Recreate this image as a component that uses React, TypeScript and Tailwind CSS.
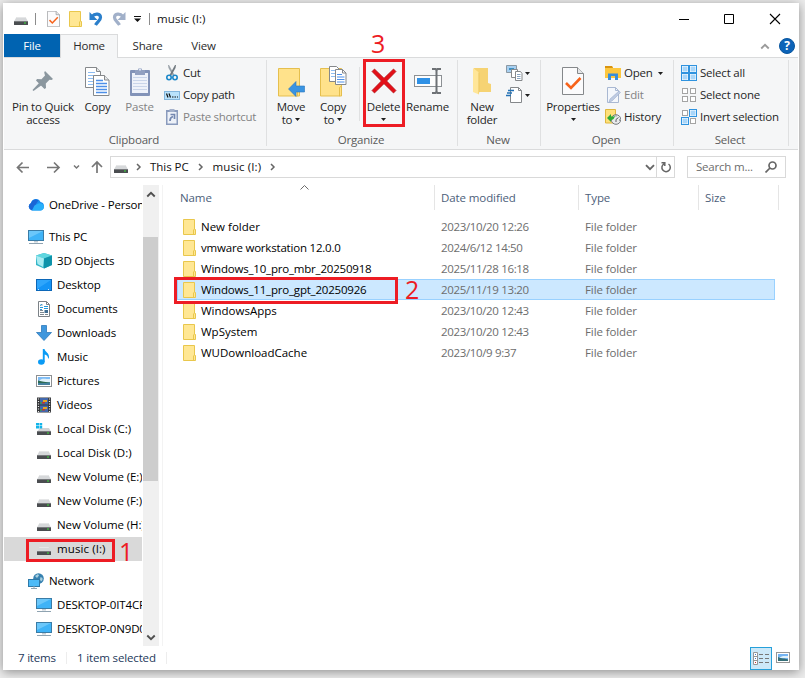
import type { ReactNode } from "react";

type IconProps = { className?: string };

function DriveIcon({ className = "w-4 h-4" }: IconProps) {
  return (
    <svg viewBox="0 0 16 16" className={className}>
      <path d="M3.500 6h9l2.500 4.500H1z" fill="#d6d8da" />
      <path d="M3.500 6h9l.6 1H2.900z" fill="#e6e7e8" />
      <rect x="1" y="10" width="14" height="4" rx=".5" fill="#4a4d50" />
      <rect x="1" y="10" width="14" height="1" fill="#77797c" />
      <rect x="11" y="11.500" width="2" height="1" fill="#3be23b" />
    </svg>
  );
}

function SystemDriveIcon() {
  return (
    <svg viewBox="0 0 16 16" className="w-4 h-4">
      <path d="M4 7h9l2 3.500H1z" fill="#d0d2d4" />
      <rect x="1" y="10" width="14" height="4" rx=".5" fill="#4a4d50" />
      <rect x="1" y="10" width="14" height="1" fill="#77797c" />
      <rect x="11" y="11.500" width="2" height="1" fill="#3be23b" />
      <path d="M0 2h3v2.500H0zM3.500 2h2.700v2.500H3.500zM0 5h3v2.500H0zM3.500 5h2.700v2.500H3.500z" fill="#12b5ea" />
    </svg>
  );
}

function FolderIcon({ className = "w-4 h-4" }: IconProps) {
  return (
    <svg viewBox="0 0 16 16" className={className}>
      <path d="M2.500.5h11v9.500l1 .5v5h-12z" fill="#ffe794" stroke="#e9c74c" />
      <path d="M12.500 15.500v-4.500l1-1" fill="none" stroke="#e9c74c" />
    </svg>
  );
}

function CloudIcon() {
  return (
    <svg viewBox="0 0 16 16" className="w-4 h-4">
      <path d="M4 13.500A4 4 0 0 1 3 6a5 5 0 0 1 9.500-1A4.300 4.300 0 0 1 12 13.500z" fill="#1b8ff0" />
      <path d="M3 6a5 5 0 0 1 7.500-2.800L4 13.500A4 4 0 0 1 3 6z" fill="#1a66d6" />
      <path d="M6.500 8.500 11 6.300a4 4 0 0 1 5 3.500 3.600 3.600 0 0 1-3.700 3.700H4z" fill="#29b0fa" />
    </svg>
  );
}

function MonitorIcon() {
  return (
    <svg viewBox="0 0 16 16" className="w-4 h-4">
      <rect x=".5" y="1.500" width="15" height="10" fill="#3fb3f7" stroke="#3a7ca6" />
      <path d="M1 2h14L1 9z" fill="#7fd0fb" opacity=".7" />
      <path d="M6 12h4v1.500H6z" fill="#c3cdd4" />
      <path d="M1 14.500h14" stroke="#8fa3b1" />
    </svg>
  );
}

function CubeIcon() {
  return (
    <svg viewBox="0 0 16 16" className="w-4 h-4">
      <path d="M8 0l8 2.500v9.500L8 15.500 0 12V2.500z" fill="#35b6c8" />
      <path d="M8 0l8 2.500-8 3-8-3z" fill="#5fd6df" />
      <path d="M8 5.500l8-3v9.500l-8 3.500z" fill="#0e93aa" />
      <path d="M0 2.500l8 3-1 8.500-5.500-3z" fill="#a8ecf2" />
    </svg>
  );
}

function DesktopIcon() {
  return (
    <svg viewBox="0 0 16 16" className="w-4 h-4">
      <rect x=".5" y="2.500" width="15" height="11" fill="#1494f6" stroke="#0c67b8" />
      <path d="M1 3h14L1 12z" fill="#3fb0ff" opacity=".6" />
      <path d="M2 12.500h1.500M12 12.500h2" stroke="#bfe2ff" strokeDasharray="1 1" />
    </svg>
  );
}

function DocumentIcon() {
  return (
    <svg viewBox="0 0 16 16" className="w-4 h-4">
      <path d="M2.500.5h8l3 3v12h-11z" fill="#fff" stroke="#7c8287" />
      <path d="M10.500.5v3h3" fill="none" stroke="#7c8287" />
      <path d="M4 11.500h4M4 13.500h4M4 9.500h3M9 13.500h3" stroke="#7f8a91" />
      <path d="M4 4.500l1.500-1 1 .5M4 6.500h3M8 5.500h4M8 7.500h4M4 8.500h2" stroke="#2398db" />
      <rect x="8.500" y="9" width="3.500" height="3" fill="#3f6d92" />
    </svg>
  );
}

function DownloadIcon() {
  return (
    <svg viewBox="0 0 16 16" className="w-4 h-4">
      <path d="M5.500.5h5v7h5L8 15.500.5 7.500h5z" fill="#3f97dd" stroke="#2c79bb" strokeWidth=".8" />
    </svg>
  );
}

function MusicIcon() {
  return (
    <svg viewBox="0 0 16 16" className="w-4 h-4">
      <ellipse cx="5.300" cy="13" rx="3.300" ry="2.700" fill="#0a9bf5" />
      <path d="M6.800 0h1.700c.5 3 5 4 4.500 8.500l-.8 1.500c-.2-3-1.700-4-3.500-4.500V13H6.800z" fill="#0a9bf5" />
    </svg>
  );
}

function PictureIcon() {
  return (
    <svg viewBox="0 0 16 16" className="w-4 h-4">
      <rect x=".5" y="2.500" width="15" height="11" fill="#fff" stroke="#8c8f92" />
      <rect x="2" y="4" width="12" height="8" fill="#7ebcf5" />
      <path d="M4 7c2-2 5-1 10-1v3H2z" fill="#dff0fa" />
      <path d="M2 7.500c3 .5 5 1.500 12 2V10H2z" fill="#2c6b54" />
      <path d="M2 10h12v2H2z" fill="#437f9d" />
    </svg>
  );
}

function VideoIcon() {
  return (
    <svg viewBox="0 0 16 16" className="w-4 h-4">
      <path d="M1 .500h14v15H1z" fill="#35373a" />
      <path d="M4 1h8v6.500H4zM4 8.500h8V15H4z" fill="#4268ad" />
      <path d="M2.500 1.500v14M13.500 1.500v14" stroke="#eee" strokeWidth="1.200" strokeDasharray="1 1.500" />
      <path d="M7 3h4v2H7zM7 10h4v2H7z" fill="#e3a522" />
      <path d="M6 5h3v1.500H6zM6 12h3v1.500H6z" fill="#c3352b" />
      <path d="M4 5h1.500v2H4zM4 12h1.500v2H4z" fill="#3a9b4c" />
    </svg>
  );
}

function NetworkIcon() {
  return (
    <svg viewBox="0 0 16 16" className="w-4 h-4">
      <circle cx="10.500" cy="5.500" r="5.300" fill="#3681b0" />
      <path d="M7 3l3-2 1 1.500-2 2.500zM12.500 4l2 1v2l-1.500 1.500-1-2z" fill="#a9cfdf" />
      <rect x=".5" y="6.500" width="11" height="7" fill="#4dbbf8" stroke="#2f79a8" />
      <path d="M3 15.500h6M5 14h2" stroke="#8fa3b1" />
    </svg>
  );
}

function CheckPageIcon({ className }: IconProps) {
  return (
    <svg viewBox="0 0 22 28" className={className}>
      <path d="M.5.500h15l6 6v21H.5z" fill="#fbfbfc" stroke="#85888b" />
      <path d="M15.500.5v6h6" fill="#e4e6e8" stroke="#85888b" />
      <path d="M4 16l5 5 9.500-10" fill="none" stroke="#f7631b" strokeWidth="2.600" />
    </svg>
  );
}

function UndoIcon({ flip = false }: { flip?: boolean }) {
  return (
    <svg viewBox="0 0 14 15" className={flip ? "w-[14px] h-[15px] -scale-x-100" : "w-[14px] h-[15px]"}>
      <path
        d="M3 5.500C6 2 11.500 2.500 11.500 6.500c0 3-3 4-5 7.500"
        fill="none"
        stroke={flip ? "#a1b0c9" : "#2b7fcb"}
        strokeWidth="3.200"
      />
      <path d="M.5 1v8H8.500z" fill={flip ? "#a1b0c9" : "#2b7fcb"} />
    </svg>
  );
}

function PinIcon() {
  return (
    <svg viewBox="0 0 22 22" className="w-[22px] h-[22px]">
      <path d="M13 1l8 8-1.500 1-2-.3-3.700 3.800.2 4.500-1.500 1L4 10.500l1-1.500 4.500.2L13 5.500l-.8-3z" fill="#8b979f" />
      <path d="M8 12l2.500 2.500L1.500 21 .5 20z" fill="#8b979f" />
    </svg>
  );
}

function PagesIcon() {
  return (
    <svg viewBox="0 0 25 29" className="w-[25px] h-[29px]">
      <path d="M.5.5h11l4 4v16H.5z" fill="#fff" stroke="#85888b" />
      <path d="M11.500.5v4h4" fill="#e4e6e8" stroke="#85888b" />
      <path d="M3 5.500h7M3 8.500h10M3 11.500h10M3 14.500h10M3 17.500h10" stroke="#8dbcf1" />
      <path d="M8.500 8.500h11l4.500 4.500v15.500H8.500z" fill="#fff" stroke="#85888b" />
      <path d="M19.500 8.500v4.500h4.500" fill="#e4e6e8" stroke="#85888b" />
      <path d="M11 13.500h7M11 16.500h11M11 19.500h11M11 22.500h11M11 25.500h11" stroke="#4d8fe8" strokeWidth="1.300" />
    </svg>
  );
}

function PasteIcon() {
  return (
    <svg viewBox="0 0 20 29" className="w-5 h-[29px]">
      <rect x="0" y="3" width="20" height="26" rx="1" fill="#8293b8" />
      <path d="M2 6h16v20H2z" fill="#eef2fa" />
      <path d="M3 10.500h14M3 13.500h14M3 16.500h14M3 19.500h14M3 22.500h14" stroke="#c9d5ea" />
      <path d="M5 3h3a2 2 0 0 1 4 0h3v5H5z" fill="#91a0c1" />
      <rect x="9" y="1.500" width="2" height="2" fill="#dfe6f2" />
    </svg>
  );
}

function ScissorsIcon() {
  return (
    <svg viewBox="0 0 16 16" className="w-4 h-4">
      <path d="M4 0l1 0 5.500 10-1.500 1L4.500 3z" fill="#9ba3aa" />
      <path d="M12 0l-1 0L5.500 10 7 11l4.500-8z" fill="#70787f" />
      <circle cx="5" cy="12.500" r="2.200" fill="none" stroke="#1b87c9" strokeWidth="1.600" />
      <circle cx="11" cy="12.500" r="2.200" fill="none" stroke="#1b87c9" strokeWidth="1.600" />
    </svg>
  );
}

function PathIcon() {
  return (
    <svg viewBox="0 0 16 16" className="w-4 h-4">
      <rect x="0" y="4" width="16" height="9" fill="#84b6dd" />
      <rect x="1" y="5" width="14" height="7" fill="#b9e2fb" />
      <path d="M2.500 6.500l1.500 4M5 6.500l1.500 4M8 10h1.500M10.500 10H12M13 10h1" stroke="#111" strokeWidth="1.200" />
    </svg>
  );
}

function ShortcutIcon() {
  return (
    <svg viewBox="0 0 16 16" className="w-4 h-4">
      <path d="M2 1h12v15H2z" fill="#8a9bbd" />
      <path d="M3.500 3h9v11.500h-9z" fill="#edf1f8" />
      <path d="M5.500 0h5v3h-5z" fill="#a4b1cb" />
      <path d="M6 12c0-3 1-4 3-4.500M6.500 5.500h4v4.500" fill="none" stroke="#7488b0" strokeWidth="1.700" />
    </svg>
  );
}

function BigFolder({ children }: { children: ReactNode }) {
  return (
    <svg viewBox="0 0 28 32" className="w-7 h-8">
      <path d="M1.500 3.500h21v18l-1.500 1v8.500H1.500z" fill="#ffe28b" stroke="#e5bf4e" />
      <path d="M20.500 31v-8.500l2-1.500v10z" fill="#ffe28b" stroke="#e5bf4e" />
      {children}
    </svg>
  );
}

function MoveToIcon() {
  return (
    <BigFolder>
      <path d="M11.500 24l7.500-7.500v4.500h8.500v6H19v4.500z" fill="#3994e2" stroke="#2875bd" strokeWidth=".6" />
    </BigFolder>
  );
}

function CopyToIcon() {
  return (
    <BigFolder>
      <path d="M10.500 1.500h7l3 3v12h-10z" fill="#fff" stroke="#85888b" />
      <path d="M12 5.500h5M12 8.500h5M12 11.500h5" stroke="#8dbcf1" />
      <path d="M16.500 4.500h7l3.500 3.500v11.500H16.500z" fill="#fff" stroke="#85888b" />
      <path d="M23.500 4.500v3.500h3.500" fill="none" stroke="#85888b" />
      <path d="M18 9.500h5M18 12h7.500M18 14.500h7.500M18 17h7.500" stroke="#4d8fe8" />
    </BigFolder>
  );
}

function DeleteIcon() {
  return (
    <svg viewBox="0 0 26 26" className="w-[26px] h-[26px]">
      <path d="M3.500 1L13 10.200 22.500 1 25 3.500 15.700 13 25 22.500 22.500 25 13 15.700 3.500 25 1 22.500 10.300 13 1 3.500z" fill="#e30f17" stroke="#ad1016" strokeWidth=".7" />
    </svg>
  );
}

function RenameIcon() {
  return (
    <svg viewBox="0 0 28 26" className="w-7 h-[26px]">
      <rect x=".5" y="7.500" width="27" height="11" fill="#fdfdfd" stroke="#8c9094" />
      <rect x="3" y="10" width="13" height="6" fill="#2f91e6" />
      <path d="M18 1h3.500l1 1.500 1-1.500H27M18 25h3.500l1-1.500 1 1.500H27M22.500 2v22" fill="none" stroke="#6d7175" strokeWidth="2" />
    </svg>
  );
}

function NewFolderIcon() {
  return (
    <svg viewBox="0 0 18 28" className="w-[18px] h-7">
      <path d="M1 1h14v15l3 1v8H4z" fill="#f6d373" />
      <path d="M0 1l6 4.500V27.500L0 25z" fill="#ffe699" />
      <path d="M5.500 5.500h.8V25l-.8 2.500z" fill="#e9c35c" />
    </svg>
  );
}

function NewItemIcon() {
  return (
    <svg viewBox="0 0 17 16" className="w-[17px] h-4">
      <path d="M.5.5h10v7H.5z" fill="#a7cff0" stroke="#8b98a3" />
      <path d="M3 3h5v2H3z" fill="#3d8fc2" />
      <path d="M5.500 4.500h6v8h-6z" fill="#fff" stroke="#85888b" />
      <path d="M9.500 6.500h5l1.500 2v7H9.500z" fill="#fff" stroke="#85888b" />
      <path d="M11 9.500h3.500M11 11.500h3.500M11 13.500h3.500" stroke="#89a4c1" />
    </svg>
  );
}

function EasyAccessIcon() {
  return (
    <svg viewBox="0 0 17 16" className="w-[17px] h-4">
      <path d="M4.500.5h8l3 3v12h-11z" fill="#fff" stroke="#85888b" />
      <path d="M12.500.5v3h3" fill="none" stroke="#85888b" />
      <path d="M2 3.500h6M1 6h5M0 8.500h5" stroke="#2371b5" strokeWidth="1.500" />
    </svg>
  );
}

function OpenIcon() {
  return (
    <svg viewBox="0 0 16 16" className="w-4 h-4">
      <path d="M0 1h7l1 2h8v10H0z" fill="#fcc740" />
      <path d="M0 1h7l1 2H0z" fill="#d99410" />
      <path d="M3 15V8.500h10V15h-3v-4H6v4z" fill="#378edc" />
    </svg>
  );
}

function EditIcon() {
  return (
    <svg viewBox="0 0 16 16" className="w-4 h-4">
      <path d="M2.500.5h8l3 3v12h-11z" fill="#f4f7fc" stroke="#a9b8d2" />
      <path d="M10.500.5v3h3" fill="none" stroke="#a9b8d2" />
      <path d="M14 4l1.500 1.500L7 14l-3 1 1-3z" fill="#becbe2" stroke="#94a7ca" strokeWidth=".5" />
    </svg>
  );
}

function HistoryIcon() {
  return (
    <svg viewBox="0 0 16 16" className="w-4 h-4">
      <path d="M.5.5h10v13.500H.5z" fill="#ffe07a" stroke="#dfb73e" />
      <circle cx="11" cy="10.500" r="4.800" fill="#e9ebec" stroke="#74797d" />
      <path d="M11 10.500l2.500-2M11 10.500V13M8 8l1 1M11 6.500v1M14 11h1" stroke="#5c6165" />
      <path d="M2 9l4-4v2.500c3 0 3 0 4-1-.5 3-2 4.500-4 4.500V13z" fill="#2faa35" />
    </svg>
  );
}

function TilesIcon({ on }: { on: boolean[] }) {
  const spots = [[0, 0], [8, 0], [0, 8], [8, 8]];
  return (
    <svg viewBox="0 0 16 16" className="w-4 h-4">
      {spots.map(([x, y], i) =>
        on[i] ? (
          <g key={i}>
            <rect x={x + 0.5} y={y + 0.5} width="7" height="7" fill="#fff" stroke="#2f93df" />
            <rect x={x + 1.5} y={y + 1.5} width="5" height="5" fill="#a9d6f9" />
          </g>
        ) : (
          <rect key={i} x={x + 1.5} y={y + 1.5} width="5" height="5" fill="#fff" stroke="#a4a4a4" />
        ),
      )}
    </svg>
  );
}

function Caret() {
  return (
    <svg viewBox="0 0 5 3" className="w-[5px] h-[3px] shrink-0">
      <path d="M0 0h5L2.500 3z" fill="#1e1e1e" />
    </svg>
  );
}

function Chevron({ className, d = "M2 1l3 3-3 3" }: { className: string; d?: string }) {
  return (
    <svg viewBox="0 0 8 8" className={className}>
      <path d={d} fill="none" stroke="currentColor" strokeWidth="1.500" />
    </svg>
  );
}

function BigButton({ icon, lines, width, dim = false, caret = false }: {
  icon: ReactNode;
  lines: string[];
  width: string;
  dim?: boolean;
  caret?: boolean;
}) {
  return (
    <div className={`${width} shrink-0 flex flex-col items-center`}>
      <div className="h-[38px] flex items-center justify-center">{icon}</div>
      {lines.map((line, i) => (
        <div
          key={line}
          className={`h-[13px] leading-[13px] flex items-center gap-[3px] ${dim ? "text-[#838383]" : ""}`}
        >
          {line}
          {caret && i === 1 && <Caret />}
        </div>
      ))}
      {caret && lines.length === 1 && (
        <div className="h-3 flex items-center"><Caret /></div>
      )}
    </div>
  );
}

function SmallButton({ icon, label, dim = false, caret = false }: {
  icon: ReactNode;
  label: string;
  dim?: boolean;
  caret?: boolean;
}) {
  return (
    <div className={`h-[22px] flex items-center gap-[3px] ${dim ? "text-[#838383]" : ""}`}>
      {icon}
      <span>{label}</span>
      {caret && <span className="pl-[2px] flex"><Caret /></span>}
    </div>
  );
}

function Group({ label, width, children }: { label: string; width: string; children: ReactNode }) {
  return (
    <div className={`${width} shrink-0 mt-[2px] h-[86px] border-r border-[#dfe0e1] flex flex-col justify-between`}>
      <div className="flex pt-[2px] h-[71px]">{children}</div>
      <div className="h-[13px] leading-[13px] text-center text-[#5a5a5a] -ml-[2px]">{label}</div>
    </div>
  );
}

const tree = [
  { icon: <CubeIcon />, label: "3D Objects" },
  { icon: <DesktopIcon />, label: "Desktop" },
  { icon: <DocumentIcon />, label: "Documents" },
  { icon: <DownloadIcon />, label: "Downloads" },
  { icon: <MusicIcon />, label: "Music" },
  { icon: <PictureIcon />, label: "Pictures" },
  { icon: <VideoIcon />, label: "Videos" },
  { icon: <SystemDriveIcon />, label: "Local Disk (C:)", tracking: "tracking-[0.05px]" },
  { icon: <DriveIcon />, label: "Local Disk (D:)", tracking: "tracking-[0px]" },
  { icon: <DriveIcon />, label: "New Volume (E:)" },
  { icon: <DriveIcon />, label: "New Volume (F:)" },
  { icon: <DriveIcon />, label: "New Volume (H:)" },
  { icon: <DriveIcon />, label: "music (I:)", tracking: "tracking-[0.1px]", selected: true },
];

const files = [
  { name: "New folder", date: "2023/10/20 12:26" },
  { name: "vmware workstation 12.0.0", date: "2024/6/12 14:50", tight: true },
  { name: "Windows_10_pro_mbr_20250918", date: "2025/11/28 16:18", tight: true },
  { name: "Windows_11_pro_gpt_20250926", date: "2025/11/19 13:20", tight: true, selected: true },
  { name: "WindowsApps", date: "2023/10/20 12:43" },
  { name: "WpSystem", date: "2023/10/20 12:43" },
  { name: "WUDownloadCache", date: "2023/10/9 9:37" },
];

function TreeRow({ icon, label, root = false, tracking = "tracking-[-0.1px]", selected = false }: {
  icon: ReactNode;
  label: string;
  root?: boolean;
  tracking?: string;
  selected?: boolean;
}) {
  return (
    <div
      className={`h-6 w-[138px] flex items-center gap-[5px] overflow-hidden whitespace-nowrap ${
        root ? "pl-6" : "pl-8"
      } ${tracking} ${selected ? "bg-[#d9d9d9]" : ""}`}
    >
      <span className="shrink-0">{icon}</span>
      <span>{label}</span>
    </div>
  );
}

function TitleBar() {
  return (
    <div className="h-[31px] flex items-center pl-[9px] text-[#111]">
      <DriveIcon className="w-4 h-4" />
      <span className="ml-[6px] w-px h-3 bg-[#8c8c8c]" />
      <CheckPageIcon className="ml-[11px] w-[13px] h-4" />
      <FolderIcon className="ml-[7px] w-4 h-4" />
      <span className="ml-[6px]"><UndoIcon /></span>
      <span className="ml-[9px]"><UndoIcon flip /></span>
      <svg viewBox="0 0 7 6" className="ml-[8px] mt-px w-[7px] h-[6px]">
        <path d="M0 .500h7" stroke="#111" />
        <path d="M0 2.500h7L3.500 6z" fill="#111" />
      </svg>
      <span className="ml-[8px] w-px h-3 bg-[#8c8c8c]" />
      <span className="ml-[7px] tracking-[0.1px]">music (I:)</span>
      <svg viewBox="0 0 102 12" className="ml-auto mr-[17px] w-[102px] h-3" fill="none" stroke="#000">
        <path d="M0 6.500h10" />
        <path d="M45.500 1.500h9v9h-9z" />
        <path d="M91 1l10 10M101 1L91 11" strokeWidth="1.100" />
      </svg>
    </div>
  );
}

function Tabs() {
  return (
    <div className="h-6 flex leading-6 text-[#2b2b2b] border-b border-[#dadbdc]">
      <div className="w-14 h-[23px] bg-[#0063b1] text-white text-center leading-[23px]">File</div>
      <div className="w-[58px] h-6 bg-[#f5f6f7] border-t border-x border-[#dadbdc] text-center leading-[22px]">Home</div>
      <div className="w-[59px] text-center leading-[23px]">Share</div>
      <div className="w-[53px] text-center leading-[23px]">View</div>
      <div className="ml-auto mr-[3px] flex items-center gap-[9px]">
        <Chevron className="w-[10px] h-[10px] text-[#9a9a9a]" d="M1 6l3-3 3 3" />
        <div className="w-4 h-4 rounded-full bg-[#0c63b8] border border-[#09569f] text-white font-bold text-[12px] leading-[14px] text-center">
          ?
        </div>
      </div>
    </div>
  );
}

function Ribbon() {
  return (
    <div className="h-[92px] bg-[#f5f6f7] border-b border-[#dadbdc] flex text-[#262626] whitespace-nowrap">
      <Group label="Clipboard" width="w-[263px]">
        <BigButton width="w-[78px]" icon={<PinIcon />} lines={["Pin to Quick", "access"]} />
        <BigButton width="w-[31px]" icon={<PagesIcon />} lines={["Copy"]} />
        <BigButton width="w-[53px]" icon={<PasteIcon />} lines={["Paste"]} dim />
        <div className="-ml-[2px] tracking-[-0.3px]">
          <SmallButton icon={<ScissorsIcon />} label="Cut" />
          <SmallButton icon={<PathIcon />} label="Copy path" />
          <SmallButton icon={<ShortcutIcon />} label="Paste shortcut" dim />
        </div>
      </Group>
      <Group label="Organize" width="w-[191px]">
        <BigButton width="w-[48px]" icon={<MoveToIcon />} lines={["Move", "to"]} caret />
        <BigButton width="w-[36px]" icon={<CopyToIcon />} lines={["Copy", "to"]} caret />
        <div className="ml-[8px] mt-[5px] w-px h-[54px] bg-[#e0e1e2]" />
        <BigButton width="w-[47px]" icon={<DeleteIcon />} lines={["Delete"]} caret />
        <BigButton width="w-[41px]" icon={<RenameIcon />} lines={["Rename"]} />
      </Group>
      <Group label="New" width="w-[83px]">
        <BigButton width="w-[48px]" icon={<NewFolderIcon />} lines={["New", "folder"]} />
        <div>
          <div className="h-[22px] flex items-center gap-[2px]"><NewItemIcon /><Caret /></div>
          <div className="h-[22px] flex items-center gap-[2px]"><EasyAccessIcon /><Caret /></div>
        </div>
      </Group>
      <Group label="Open" width="w-[133px]">
        <BigButton width="w-[64px]" icon={<CheckPageIcon className="w-[22px] h-7" />} lines={["Properties"]} caret />
        <div>
          <SmallButton icon={<OpenIcon />} label="Open" caret />
          <SmallButton icon={<EditIcon />} label="Edit" dim />
          <SmallButton icon={<HistoryIcon />} label="History" />
        </div>
      </Group>
      <Group label="Select" width="w-[115px]">
        <div className="pl-[7px]">
          <SmallButton icon={<TilesIcon on={[true, true, true, true]} />} label="Select all" />
          <SmallButton icon={<TilesIcon on={[false, false, false, false]} />} label="Select none" />
          <SmallButton icon={<TilesIcon on={[false, true, true, false]} />} label="Invert selection" />
        </div>
      </Group>
    </div>
  );
}

function AddressBar() {
  return (
    <div className="h-[35px] pt-[6px] flex items-start">
      <svg viewBox="0 0 106 22" className="w-[106px] h-[22px] shrink-0" fill="none" stroke="#767676" strokeWidth="1.700">
        <path d="M25 11.500H14M18.500 6.500l-5 5 5 5" />
        <path d="M43 11.500h11.500M50 6.500l5 5-5 5" />
        <path d="M70 9.500l2.500 2.500L75 9.500" strokeWidth="1.500" />
        <path d="M93 17V6.500M88 11l5-5 5 5" />
      </svg>
      <div className="w-[565px] h-[22px] border border-[#d9d9d9] flex items-center text-[#111]">
        <DriveIcon className="ml-[2px] w-4 h-4" />
        <Chevron className="ml-[6px] w-2 h-2 text-[#666]" />
        <span className="ml-[7px] tracking-[-0.05px]">This PC</span>
        <Chevron className="ml-[8px] w-2 h-2 text-[#666]" />
        <span className="ml-[8px] tracking-[0.1px]">music (I:)</span>
        <Chevron className="ml-[8px] w-2 h-2 text-[#666]" />
        <Chevron className="ml-auto mr-[1px] w-[10px] h-[10px] text-[#666]" d="M.8 2.500L4 5.700l3.200-3.200" />
        <div className="w-[18px] h-5 border-l border-[#d9d9d9] flex items-center justify-center">
          <svg viewBox="0 0 12 12" className="w-3 h-3" fill="none" stroke="#666" strokeWidth="1.500">
            <path d="M8.500 3A4.200 4.200 0 1 1 4 2.800M1.500 1.700h3.300v3.300" />
          </svg>
        </div>
      </div>
      <div className="ml-3 w-[99px] h-[22px] border border-[#d9d9d9] flex items-center text-[#6d6d6d]">
        <span className="ml-2">Search m...</span>
        <svg viewBox="0 0 12 12" className="ml-auto mr-2 w-3 h-3" fill="none" stroke="#666" strokeWidth="1.700">
          <circle cx="7.500" cy="4.500" r="3.500" />
          <path d="M5 7L.5 11.500" />
        </svg>
      </div>
    </div>
  );
}

function NavPane() {
  return (
    <div className="w-[158px] flex text-black">
      <div className="w-[138px] mr-px pt-2 flex flex-col gap-2">
        <TreeRow icon={<CloudIcon />} label="OneDrive - Personal" root tracking="tracking-[-0.15px]" />
        <div>
          <TreeRow icon={<MonitorIcon />} label="This PC" root />
          {tree.map((row) => (
            <TreeRow key={row.label} {...row} />
          ))}
        </div>
        <div>
          <TreeRow icon={<NetworkIcon />} label="Network" root />
          <TreeRow icon={<MonitorIcon />} label="DESKTOP-0IT4CPK" tracking="tracking-[-0.15px]" />
          <TreeRow icon={<MonitorIcon />} label="DESKTOP-0N9D0QR" tracking="tracking-[-0.15px]" />
        </div>
      </div>
      <div className="w-[16px] bg-[#f0f0f0] flex flex-col text-[#505050]">
        <div className="h-[52px] pt-1 flex justify-center">
          <Chevron className="w-[10px] h-[10px]" d="M1 6l3-3 3 3" />
        </div>
        <div className="w-[15px] h-[244px] bg-[#cdcdcd]" />
        <div className="mt-auto h-[13px] flex justify-center">
          <Chevron className="w-[10px] h-[10px]" d="M1 2l3 3 3-3" />
        </div>
      </div>
    </div>
  );
}

function FileList() {
  return (
    <div className="flex-1 border-l border-[#f3f3f3] -mr-px">
      <div className="h-[25px] flex leading-[25px] text-[#4c607a] tracking-[-0.1px]">
        <div className="relative w-[272px] pl-[17px] border-r border-[#e5e5e5]">
          Name
          <svg viewBox="0 0 9 5" className="absolute left-[137px] top-0 w-[9px] h-[5px]">
            <path d="M.5 4.500l4-4 4 4" fill="none" stroke="#6b6b6b" />
          </svg>
        </div>
        <div className="w-[144px] pl-[6px] border-r border-[#e5e5e5]">Date modified</div>
        <div className="w-[120px] pl-[6px] border-r border-[#e5e5e5]">Type</div>
        <div className="w-[80px] pl-[6px] border-r border-[#e5e5e5]">Size</div>
      </div>
      <div className="pt-[6px] pl-[14px]">
        {files.map((file) => (
          <div
            key={file.name}
            className={`h-[21px] w-[598px] flex items-center text-[#6d6d6d] ${
              file.selected ? "bg-[#cce8ff] outline outline-1 -outline-offset-1 outline-[#99d1ff]" : ""
            }`}
          >
            <FolderIcon className="ml-1 w-4 h-4" />
            <span className={`ml-1 w-[240px] text-black ${file.tight ? "tracking-[-0.2px]" : "tracking-[0px]"}`}>
              {file.name}
            </span>
            <span className="w-[144px] tracking-[-0.35px]">{file.date}</span>
            <span className="tracking-[-0.1px]">File folder</span>
          </div>
        ))}
      </div>
    </div>
  );
}

function StatusBar() {
  return (
    <div className="h-6 flex items-center pl-[14px] text-[#1e395b]">
      <span className="w-[48px]">7 items</span>
      <span className="w-px h-3 bg-[#ededed]" />
      <span className="w-[99px] pl-[10px] whitespace-nowrap tracking-[-0.15px]">1 item selected</span>
      <span className="w-px h-3 bg-[#ededed]" />
      <div className="ml-auto mr-[8px] flex items-center gap-[4px]">
        <div className="w-[22px] h-[23px] bg-[#cce8f8] border border-[#26a0da] flex items-center justify-center">
          <svg viewBox="0 0 16 13" className="w-4 h-[13px]" fill="none">
            <path d="M.5.5h4v12h-4zM.5 4.500h4M.5 8.500h4" fill="#fff" stroke="#969696" />
            <path d="M6 2.500h4M12 2.500h4M6 6.500h4M12 6.500h4M6 10.500h4M12 10.500h4" stroke="#777" />
            <path d="M2 2.500h1M2 6.500h1" stroke="#4579c3" />
            <path d="M2 10.500h1" stroke="#d32929" />
          </svg>
        </div>
        <svg viewBox="0 0 14 11" className="w-[14px] h-[11px] -mt-[2px]">
          <rect x=".5" y=".5" width="13" height="10" fill="#fff" stroke="#969696" />
          <rect x="2" y="2" width="10" height="7" fill="#75b4f3" />
          <path d="M2 6l5-2h5v2z" fill="#dff1fa" />
          <path d="M2 5c4 2 6 1 10 2.500V9H2z" fill="#366f78" />
        </svg>
      </div>
    </div>
  );
}

// Red outlines and step numbers laid over the window
function Callouts() {
  return (
    <div className="text-[#ed1c24] text-[25px] leading-6 tracking-normal">
      <div className="absolute left-[363px] top-[59px] w-[42px] h-[68px] border-3 border-[#ed1c24]" />
      <div className="absolute left-[174px] top-[277px] w-[224px] h-[27px] border-3 border-[#ed1c24]" />
      <div className="absolute left-[26px] top-[539px] w-[89px] h-[23px] border-3 border-[#ed1c24]" />
      <span className="absolute left-[371px] top-[31px]">3</span>
      <span className="absolute left-[405px] top-[277px]">2</span>
      <span className="absolute left-[119px] top-[539px]">1</span>
    </div>
  );
}

export default function App() {
  return (
    <div className="relative w-[805px] h-[678px] pl-[3px] pt-[3px] overflow-hidden bg-[#ececec] font-['Open_Sans','Noto_Sans',sans-serif] text-[11.5px] tracking-[-0.2px]">
      <div className="w-[796px] h-[667px] pl-px pr-[1px] bg-white shadow-[0_2px_10px_rgba(0,0,0,0.4)] flex flex-col">
        <TitleBar />
        <Tabs />
        <Ribbon />
        <AddressBar />
        <div className="h-[461px] flex">
          <NavPane />
          <FileList />
        </div>
        <StatusBar />
      </div>
      <Callouts />
    </div>
  );
}
